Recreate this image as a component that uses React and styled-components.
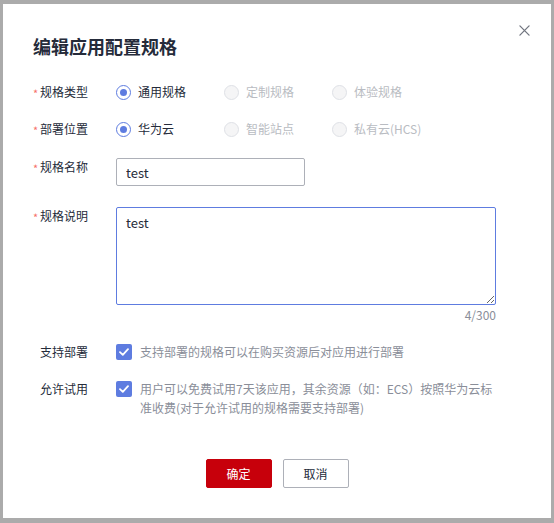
import { useEffect, useRef } from 'react';
import styled, { createGlobalStyle } from 'styled-components';

const GlobalStyle = createGlobalStyle`
  html, body {
    margin: 0;
    padding: 0;
    background: #ababab;
  }
  body {
    font-family: "Noto Sans CJK SC", "Noto Sans", sans-serif;
    color: #252b3a;
  }
`;

const TYPES = [
  { label: '通用规格', checked: true },
  { label: '定制规格', disabled: true },
  { label: '体验规格', disabled: true },
];

const LOCATIONS = [
  { label: '华为云', checked: true },
  { label: '智能站点', disabled: true },
  { label: '私有云(HCS)', disabled: true },
];

function RadioGroup({ options }) {
  return (
    <Radios>
      {options.map((o) => (
        <RadioItem key={o.label} $disabled={o.disabled}>
          <RadioDot $checked={o.checked} $disabled={o.disabled} />
          {o.label}
        </RadioItem>
      ))}
    </Radios>
  );
}

function CheckMark() {
  return (
    <Check>
      <svg width="10" height="8" viewBox="0 0 10 8">
        <path d="M1 4.2 L3.8 6.8 L9 1.2" fill="none" stroke="#fff" strokeWidth="1.8" strokeLinecap="round" strokeLinejoin="round" />
      </svg>
    </Check>
  );
}

export default function App() {
  const descRef = useRef(null);

  useEffect(() => {
    const el = descRef.current;
    if (el) {
      el.focus();
      el.setSelectionRange(4, 4);
    }
  }, []);

  return (
    <Page>
      <GlobalStyle />
      <Dialog>
        <CloseButton aria-label="close">
          <svg width="11" height="11" viewBox="0 0 12 12">
            <path d="M1 1 L11 11 M11 1 L1 11" stroke="#71757f" strokeWidth="1.4" strokeLinecap="round" />
          </svg>
        </CloseButton>
        <Title>编辑应用配置规格</Title>

        <Form>
          <Row>
            <Label $required>规格类型</Label>
            <RadioGroup options={TYPES} />
          </Row>
          <Row $gap={17}>
            <Label $required>部署位置</Label>
            <RadioGroup options={LOCATIONS} />
          </Row>
          <Row $gap={19}>
            <Label $required $top={-1}>规格名称</Label>
            <TextInput defaultValue="test" />
          </Row>
          <Row $gap={21}>
            <Label $required $top={-1}>规格说明</Label>
            <Field>
              <TextArea ref={descRef} defaultValue="test" />
              <Counter>4/300</Counter>
            </Field>
          </Row>
          <Row $gap={18}>
            <Label>支持部署</Label>
            <CheckRow>
              <CheckMark />
              <CheckText>支持部署的规格可以在购买资源后对应用进行部署</CheckText>
            </CheckRow>
          </Row>
          <Row $gap={17}>
            <Label>允许试用</Label>
            <CheckRow>
              <CheckMark />
              <CheckText>
                用户可以免费试用7天该应用，其余资源（如：ECS）按照华为云标准收费(对于允许试用的规格需要支持部署)
              </CheckText>
            </CheckRow>
          </Row>
        </Form>

        <Footer>
          <Button $primary>确定</Button>
          <Button>取消</Button>
        </Footer>
      </Dialog>
    </Page>
  );
}

const Page = styled.div`
  width: 554px;
  height: 523px;
  padding: 4px 3px 0 3px;
  box-sizing: border-box;
`;

const Dialog = styled.div`
  position: relative;
  width: 548px;
  height: 514px;
  background: #fff;
  box-sizing: border-box;
  padding: 33px 30px 0 30px;
`;

const CloseButton = styled.button`
  position: absolute;
  top: 17px;
  right: 18px;
  width: 18px;
  height: 18px;
  padding: 0;
  border: none;
  background: none;
  display: flex;
  align-items: center;
  justify-content: center;
  cursor: pointer;
`;

const Title = styled.h2`
  margin: 0;
  font-size: 18px;
  line-height: 18px;
  font-weight: 700;
  color: #252b3a;
`;

const Form = styled.div`
  margin-top: 27px;
  display: flex;
  flex-direction: column;
`;

const Row = styled.div`
  display: grid;
  grid-template-columns: 83px 1fr;
  align-items: start;
  margin-top: ${(p) => p.$gap || 0}px;
`;

const Label = styled.div`
  position: relative;
  padding-left: 7px;
  font-size: 12px;
  line-height: 20px;
  color: #252b3a;
  margin-top: ${(p) => p.$top || 0}px;

  &::before {
    content: ${(p) => (p.$required ? "'*'" : "none")};
    position: absolute;
    left: 0;
    top: 1px;
    color: #f66f6a;
    font-size: 11px;
  }
`;

const Radios = styled.div`
  display: flex;
  height: 20px;
  align-items: center;
`;

const RadioItem = styled.label`
  display: flex;
  align-items: center;
  gap: 7px;
  width: 108px;
  font-size: 12px;
  line-height: 20px;
  color: ${(p) => (p.$disabled ? '#b9bcc2' : '#252b3a')};
`;

const RadioDot = styled.span`
  position: relative;
  width: 15px;
  height: 15px;
  box-sizing: border-box;
  border-radius: 50%;
  border: 1px solid ${(p) => (p.$checked ? '#5e7ce0' : '#dfe1e6')};
  background: ${(p) => (p.$disabled ? '#f5f5f6' : '#fff')};
  flex: none;

  &::after {
    content: '';
    display: ${(p) => (p.$checked ? 'block' : 'none')};
    position: absolute;
    left: 3px;
    top: 3px;
    width: 7px;
    height: 7px;
    border-radius: 50%;
    background: #5e7ce0;
  }
`;

const TextInput = styled.input`
  width: 189px;
  height: 28px;
  box-sizing: border-box;
  border: 1px solid #adb0b8;
  border-radius: 2px;
  padding: 0 9px;
  font-family: inherit;
  font-size: 13px;
  color: #252b3a;
  outline: none;
`;

const Field = styled.div`
  display: flex;
  flex-direction: column;
  width: 380px;
`;

const TextArea = styled.textarea`
  width: 380px;
  height: 98px;
  box-sizing: border-box;
  border: 1px solid #5e7ce0;
  border-radius: 2px;
  padding: 5px 9px;
  font-family: inherit;
  font-size: 13px;
  line-height: 20px;
  color: #252b3a;
  outline: none;
  resize: both;
`;

const Counter = styled.div`
  align-self: flex-end;
  font-size: 12px;
  line-height: 18px;
  color: #8a8e99;
  margin-top: 1px;
`;

const CheckRow = styled.div`
  display: flex;
  align-items: flex-start;
  gap: 8px;
`;

const Check = styled.span`
  width: 16px;
  height: 16px;
  margin-top: 2px;
  flex: none;
  border-radius: 2px;
  background: #5e7ce0;
  display: flex;
  align-items: center;
  justify-content: center;
`;

const CheckText = styled.span`
  font-size: 12px;
  line-height: 19px;
  color: #8a8e99;
  width: 360px;
`;

const Footer = styled.div`
  position: absolute;
  left: 0;
  right: 0;
  top: 455px;
  display: flex;
  justify-content: center;
  gap: 11px;
`;

const Button = styled.button`
  width: 66px;
  height: 29px;
  box-sizing: border-box;
  border-radius: 2px;
  font-family: inherit;
  font-size: 12px;
  cursor: pointer;
  border: 1px solid ${(p) => (p.$primary ? '#c7000b' : '#adb0b8')};
  background: ${(p) => (p.$primary ? '#c7000b' : '#fff')};
  color: ${(p) => (p.$primary ? '#fff' : '#252b3a')};
`;
